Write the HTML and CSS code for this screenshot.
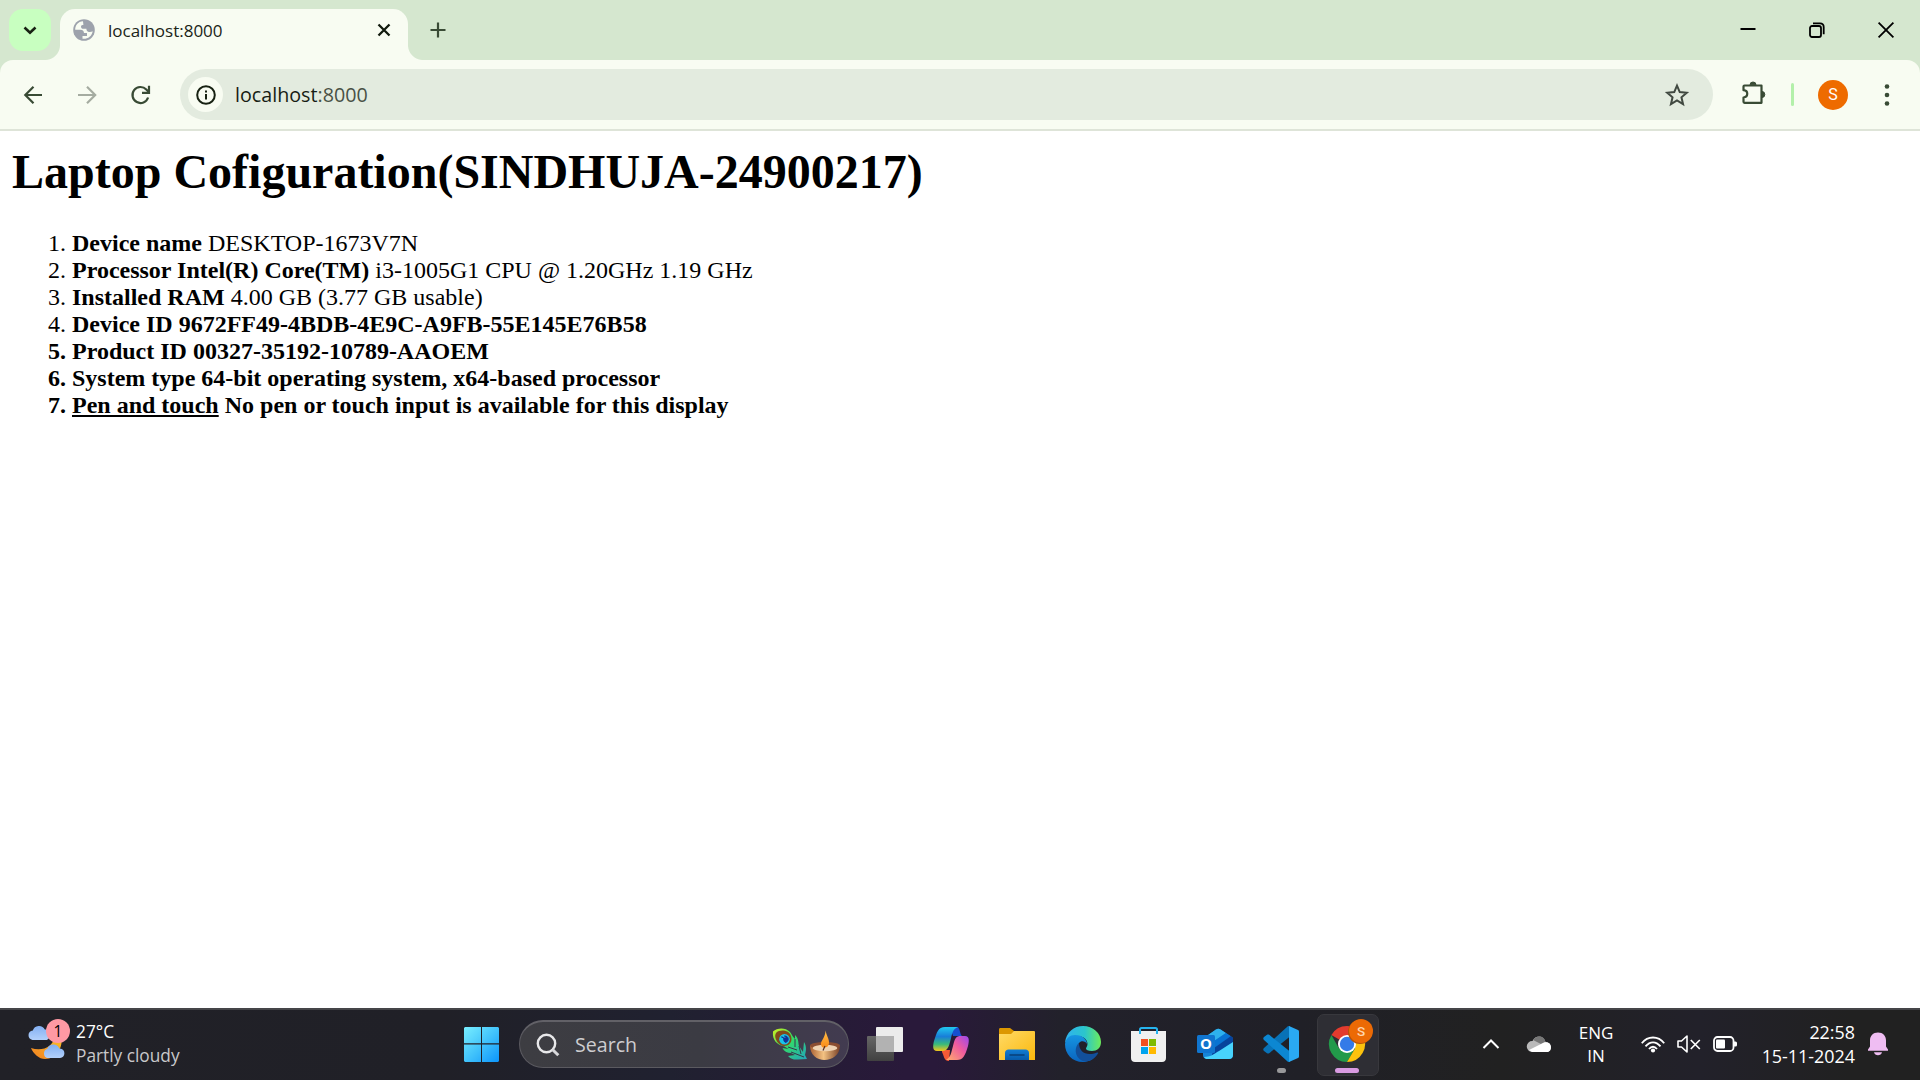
FILE: index.html
```html
<!DOCTYPE html>
<html lang="en">
<head>
<meta charset="utf-8">
<title>localhost:8000</title>
<link rel="stylesheet" href="styles.css">
</head>
<body>
<div class="screen">
  <header class="tabstrip">
    <div class="tab-search"><svg width="14" height="10" viewBox="0 0 14 10"><path d="M1.500 2.500l5.500 5.200L12.500 2.500" fill="none" stroke="#172112" stroke-width="2.600"/></svg></div>
    <div class="tab">
      <svg class="globe" width="22" height="22" viewBox="0 0 22 22"><circle cx="11" cy="11" r="10.800" fill="#9da2ac"/><path d="M10 2.200C5 2.400 2 6.500 2.200 10.800h5.200c2.200 0 3.400 1 3.600 3.200h3v3H9.500v2.700c4.500.8 9.600-2.500 10.200-7.500-1.200.8-3.300 1.200-5 .3-1-.5-1.300-1.600-1.300-2.700H10.300c-1.400 0-2.300-1-2.300-2.400C8 6.300 9.300 6 10.400 6z" fill="#f8fcf2"/></svg>
      <span class="tab-title">localhost:8000</span>
      <svg class="tab-close" width="14" height="14" viewBox="0 0 14 14"><path d="M1.500 1.500l11 11M12.500 1.500l-11 11" stroke="#111a0e" stroke-width="2.300"/></svg>
    </div>
    <svg class="new-tab" width="16" height="16" viewBox="0 0 16 16"><path d="M8 .5v15M.5 8h15" stroke="#394b35" stroke-width="2.200"/></svg>
    <div class="window-controls">
      <svg width="16" height="16" viewBox="0 0 16 16"><path d="M.5 7h15" stroke="#000" stroke-width="2"/></svg>
      <svg width="16" height="16" viewBox="0 0 16 16"><g fill="none" stroke="#000" stroke-width="1.800"><rect x="1" y="4" width="11" height="11" rx="2"/><path d="M4 1.300h7c2.300 0 3.700 1.400 3.700 3.700v7.300"/></g></svg>
      <svg width="16" height="16" viewBox="0 0 16 16"><path d="M.6.6l14.800 14.800M15.400.6L.6 15.400" stroke="#000" stroke-width="1.800"/></svg>
    </div>
  </header>

  <div class="toolbar-back">
  <nav class="toolbar">
    <svg class="nav-icon" width="20" height="20" viewBox="0 0 20 20"><path d="M19 10H2.500M10.500 1.800L2.300 10l8.200 8.200" fill="none" stroke="#394b35" stroke-width="2.200"/></svg>
    <svg class="nav-icon" width="20" height="20" viewBox="0 0 20 20"><path d="M1 10h16.500M10 1.800l8.200 8.200-8.200 8.200" fill="none" stroke="#a5aca1" stroke-width="2.200"/></svg>
    <svg class="nav-icon" width="20" height="20" viewBox="0 0 20 20"><path d="M17.100 12.500A8 8 0 1 1 15.300 4.500L17.500 6.800" fill="none" stroke="#394b35" stroke-width="2.200"/><path d="M11 7.900h7V.8" fill="none" stroke="#394b35" stroke-width="2.200"/></svg>
    <div class="omnibox">
      <span class="site-info"><svg width="20" height="20" viewBox="0 0 20 20"><circle cx="10" cy="10" r="8.800" fill="none" stroke="#172112" stroke-width="2"/><path d="M10 9v5.500M10 5.500v2" stroke="#172112" stroke-width="2"/></svg></span>
      <span class="url">localhost<span class="port">:8000</span></span>
      <svg class="star" width="24" height="24" viewBox="0 0 24 24"><path d="M12 2.600l2.750 6.500 7 .6-5.300 4.600 1.600 6.900L12 17.500l-6.050 3.700 1.600-6.900-5.300-4.600 7-.6z" fill="none" stroke="#414941" stroke-width="2" /></svg>
    </div>
    <svg class="extensions" width="26" height="26" viewBox="0 0 26 26"><path d="M3.500 5.500h17v17.300h-17a1 1 0 0 1-1-1v-4.300c5-.3 5-7 0-7.300V6.500a1 1 0 0 1 1-1z" fill="none" stroke="#394b35" stroke-width="2.200" stroke-linejoin="round"/><path d="M9 4.800a3 2.800 0 0 1 6 0zM21 11.500a2.800 3 0 0 1 0 6z" fill="#394b35" stroke="#394b35"/></svg>
    <span class="divider"></span>
    <span class="avatar">S</span>
    <svg class="menu" width="6" height="24" viewBox="0 0 6 24"><g fill="#394b35"><circle cx="3" cy="3.500" r="2.300"/><circle cx="3" cy="12" r="2.300"/><circle cx="3" cy="20.500" r="2.300"/></g></svg>
  </nav>
  </div>

  <main class="page">
    <h1>Laptop Cofiguration(SINDHUJA-24900217)</h1>
    <ol>
      <li><b>Device name</b> DESKTOP-1673V7N</li>
      <li><b>Processor Intel(R) Core(TM)</b> i3-1005G1 CPU @ 1.20GHz 1.19 GHz</li>
      <li><b>Installed RAM</b> 4.00 GB (3.77 GB usable)</li>
      <li><b>Device ID 9672FF49-4BDB-4E9C-A9FB-55E145E76B58</b></li>
      <li class="strong">Product ID 00327-35192-10789-AAOEM</li>
      <li class="strong">System type 64-bit operating system, x64-based processor</li>
      <li class="strong"><u>Pen and touch</u> No pen or touch input is available for this display</li>
    </ol>
  </main>

  <footer class="taskbar">
    <div class="weather">
      <div class="weather-icon">
        <svg width="42" height="42" viewBox="0 0 42 42">
          <defs>
            <linearGradient id="moon" x1="0" y1="1" x2="1" y2="0"><stop offset="0" stop-color="#f08022"/><stop offset="1" stop-color="#fcc227"/></linearGradient>
            <linearGradient id="cloud" x1="0" y1="0" x2="0" y2="1"><stop offset="0" stop-color="#83b0f2"/><stop offset="1" stop-color="#b2d0fb"/></linearGradient>
          </defs>
          <path d="M33 17c3 11-4 24-16 24C11 41 5.500 36 3 30c11 4 23-1 24-13z" fill="url(#moon)"/>
          <path d="M4.500 22a4.800 4.800 0 0 1 .3-9.500 6.500 6.500 0 0 1 12-1c5 0 7 10.500 1 10.500z" fill="url(#cloud)"/>
          <path d="M19 40a5 5 0 0 1 .3-9.300 6.500 6.500 0 0 1 12-.2C38 30 38 40 32 40z" fill="url(#cloud)"/>
        </svg>
        <span class="weather-badge">1</span>
      </div>
      <div class="weather-text"><span>27°C</span><span class="dim">Partly cloudy</span></div>
    </div>

    <div class="apps">
      <svg class="app" viewBox="0 0 36 36"><defs><linearGradient id="win" gradientUnits="userSpaceOnUse" x1="0" y1="0" x2="36" y2="36"><stop offset="0" stop-color="#7af0ff"/><stop offset=".5" stop-color="#43c4fb"/><stop offset="1" stop-color="#0a93fb"/></linearGradient></defs><path d="M1 1h16v16.300H0V2zM18 1h16l1 1v15.300H18zM0 18.500h17V36H1l-1-1zM18 18.500h17V35l-1 1H18z" fill="url(#win)"/></svg>
      <div class="search">
        <svg width="24" height="24" viewBox="0 0 24 24"><circle cx="10.500" cy="10.500" r="8.700" fill="none" stroke="#e8e8ea" stroke-width="2.400"/><path d="M16.500 16.500l5.800 5.800" stroke="#d7d7da" stroke-width="3"/></svg>
        <span>Search</span>
        <svg class="festive" width="70" height="36" viewBox="0 0 70 36">
          <defs>
            <linearGradient id="feather" x1="0" y1="0" x2="1" y2="1"><stop offset="0" stop-color="#d4ef20"/><stop offset=".4" stop-color="#34e160"/><stop offset="1" stop-color="#23a3bc"/></linearGradient>
            <linearGradient id="bowl" x1="0" x2="1"><stop offset="0" stop-color="#a96134"/><stop offset=".45" stop-color="#f3c282"/><stop offset="1" stop-color="#784027"/></linearGradient>
            <linearGradient id="flame" x1="0" y1="0" x2="0" y2="1"><stop offset="0" stop-color="#ffc04a"/><stop offset="1" stop-color="#f98a16"/></linearGradient>
          </defs>
          <path d="M1 4.500C5 1 13 0 18 5c2 3 3 5 5 7l0-4c4 4 3 7 4 11l4 6 1-10c3 5 2 9 1 13l2 4-9 .5c-4 .5-7-.5-10-3.500l7-1-4-2c-4 0-7-1.500-8.500-5l6 1-4-2.500C5 18 0 13 1 4.500z" fill="url(#feather)"/>
          <path d="M23 12l0 8M16 20l9 3M19 25l13 5M27 19l2 8" stroke="#34384a" stroke-width="1" fill="none"/>
          <path d="M4 6c4-4 13-3 15 3s-2 10-7 10S1 11 4 6z" fill="#814a1b"/>
          <circle cx="12.500" cy="12.300" r="5.300" fill="#19c4e8"/><path d="M9.500 10c3.500 0 1 4 4 5.500 4-1 3.500-7-1-6.500 3 2 1 3-3 1z" fill="#123196" stroke="#123196"/>
          <path d="M38 18.500C38 28 45 33 52.500 33S68 28 68 18.500z" fill="url(#bowl)"/><ellipse cx="53" cy="18.500" rx="15" ry="3.600" fill="#8b4e31"/><ellipse cx="53" cy="21" rx="12.200" ry="3.300" fill="#efd3b2"/>
          <path d="M53.500 3.500c1 5 3.500 8 3.500 12 0 6-7.500 7-8 2-.4-4 4.500-7 4.500-14z" fill="url(#flame)"/><path d="M53 19l-2 4.500" stroke="#512e24" stroke-width="1.200"/>
        </svg>
      </div>
      <svg class="app" viewBox="0 0 36 36"><defs><linearGradient id="tvb" x1="0" y1="0" x2="0" y2="1"><stop offset="0" stop-color="#666"/><stop offset="1" stop-color="#414141"/></linearGradient></defs><rect x="9" y="1" width="27" height="25" rx="1" fill="#ececec"/><rect y="10" width="27" height="25" rx="1" fill="url(#tvb)"/><path d="M9 10h18v16H9z" fill="#b2b2b2"/></svg>
      <svg class="app" viewBox="0 0 36 36">
        <defs>
          <linearGradient id="cpa" x1="0" y1="0" x2="0" y2="1"><stop offset="0" stop-color="#21c8ef"/><stop offset=".4" stop-color="#187ed8"/><stop offset=".72" stop-color="#3abb7a"/><stop offset="1" stop-color="#f6c71b"/></linearGradient>
          <linearGradient id="cpb" x1="1" y1="0" x2="0" y2="1"><stop offset="0" stop-color="#9b48ef"/><stop offset=".45" stop-color="#f05b9e"/><stop offset="1" stop-color="#ffb06a"/></linearGradient>
        </defs>
        <path d="M17 1h7c3 0 3 8 5 9h-9z" fill="#174fd0"/><path d="M9 24h8l-1 11c-5 0-5-5-7-9z" fill="#f65a36"/>
        <path d="M12 1h13c-6 2-6 8-8 15-2 8-4 9-9 9H4c-5 0-4-6-3-10C4 6 5 1 12 1z" fill="url(#cpa)"/>
        <path d="M28 10h4c5 0 4 6 3 10-3 10-5 14-11 14H13c5-3 5-7 7-14 2-8 3-10 8-10z" fill="url(#cpb)"/>
      </svg>
      <svg class="app" viewBox="0 0 36 36"><defs><linearGradient id="fold" x1="0" y1="0" x2="1" y2="1"><stop offset="0" stop-color="#ffda66"/><stop offset="1" stop-color="#fbb80d"/></linearGradient><linearGradient id="desk" x1="0" y1="0" x2="0" y2="1"><stop offset="0" stop-color="#127dd3"/><stop offset="1" stop-color="#075aaa"/></linearGradient></defs><path d="M0 3.500C0 2.500.5 2 1.500 2H11l4 3v5H0z" fill="#dc9701"/><path d="M0 8h12l3-3h20a1 1 0 0 1 1 1v28H0z" fill="url(#fold)"/><path d="M6 34v-7c0-2 1.500-3.500 3.500-3.500h17c2 0 3.500 1.500 3.500 3.500v7z" fill="url(#desk)"/><path d="M11 29h14" stroke="#083f78" stroke-width="1.500" stroke-linecap="round"/></svg>
      <svg class="app" viewBox="0 0 36 36">
        <defs><linearGradient id="edgeg" x1="0" x2="1"><stop offset="0" stop-color="#2fb2f0"/><stop offset=".55" stop-color="#2bc5cc"/><stop offset="1" stop-color="#6cec5c"/></linearGradient><linearGradient id="edgeb" x1="0" y1="0" x2="0" y2="1"><stop offset="0" stop-color="#1695e2"/><stop offset="1" stop-color="#0a64be"/></linearGradient></defs>
        <path d="M0 17C1 6 9 0 18 0c10 0 18 7 18 16 0 6-4 9-9 9-4 0-6-1-6-2.500 0-1 1.500-2 1.500-4.500 0-4-3.500-8-10-8-6 0-10 3-12.500 7z" fill="url(#edgeg)"/>
        <path d="M0 18c1-6 5-9 10-9 8 0 12 5 12 9-2-4-9-4-9 3 0 8 8 12 18 8-3 5-8 7-13 7C7 36 0 28 0 18z" fill="url(#edgeb)"/>
        <path d="M14 17c-5 4-5 16 6 18.500 6-.5 10-3 13-8 1-1-.5-1-1-1-10 4-18 0-18-9.500z" fill="#124f9a"/>
      </svg>
      <svg class="app" viewBox="0 0 36 36"><path d="M9 8V3.500C9 2.500 9.500 2 10.500 2h14c1 0 1.500.5 1.500 1.500V8" fill="none" stroke="#26b4ee" stroke-width="2"/><path d="M0 5h8v3h2V5h15v3h2V5h8v27c0 2.500-1.500 4-4 4H4c-2.500 0-4-1.500-4-4z" fill="#f0f0f0"/><path d="M10 13h7v7h-7z" fill="#f25022"/><path d="M18 13h7v7h-7z" fill="#7fba00"/><path d="M10 21h7v7h-7z" fill="#00a4ef"/><path d="M18 21h7v7h-7z" fill="#ffb900"/></svg>
      <svg class="app outlook" viewBox="0 0 36 36"><path d="M6 13L19 3.500c1.500-1 3-1 4.500 0L36 12v17c0 2.500-1.500 4-4 4H10c-2.500 0-4-1.500-4-4z" fill="#1684d7"/><path d="M8 11l11-7.500c1.500-1 3-1 4.500 0L29 7 16 16z" fill="#2eb2ed"/><path d="M29 7l5 3.300L17 22v-7z" fill="#0873d2"/><path d="M34 10l2 2v5L14 32l3-10z" fill="#07439b"/><path d="M36 16v13c0 2.500-1.500 4-4 4H10c-1 0-2-.5-3-2 6 0 10-3 15-6z" fill="#48d3fc"/><rect y="9" width="18" height="18" rx="1.500" fill="#1075cf"/><text x="9" y="23" text-anchor="middle" class="outlook-letter">O</text></svg>
      <div class="app running"><svg viewBox="0 0 36 36"><path d="M1 25l3 2.200c.8.500 1.500.5 2.200 0L27 10.500V1c-1-1.500-2-1-3 0L1 22c-1 1-1 2 0 3z" fill="#0872b7"/><path d="M1 11l3-2.200c.8-.5 1.500-.5 2.200 0L27 25.500V35c-1 1.500-2 1-3 0L1 14c-1-1-1-2 0-3z" fill="#0c87d2"/><path d="M26 0l9 4c.7.4 1 1 1 2v24c0 1-.3 1.600-1 2l-9 4z" fill="#2aa9f2"/></svg><span class="indicator"></span></div>
      <div class="app running active"><svg viewBox="0 0 36 36"><path d="M18 18L2.400 9a18 18 0 0 1 31.200 0z" fill="#e33b2e"/><path d="M2.400 9A18 18 0 0 0 18 36l8-13.500-8-4.500-8 4.500z" fill="#229a4a"/><path d="M18 9h15.600A18 18 0 0 1 18 36l8-13.500z" fill="#fcc20d"/><circle cx="18" cy="18" r="9" fill="#fff"/><circle cx="18" cy="18" r="7.200" fill="#347be8"/></svg><span class="profile-badge">S</span><span class="indicator"></span></div>
    </div>

    <div class="tray">
      <svg class="chevron" width="18" height="12" viewBox="0 0 18 12"><path d="M1.500 10L9 2.500l7.500 7.500" fill="none" stroke="#fff" stroke-width="2"/></svg>
      <svg class="onedrive" width="24" height="18" viewBox="0 0 24 18"><path d="M5 17a5.500 5.500 0 0 1 .5-11c3-6 11-6 13 1 7 0 7 10 1 10z" fill="#b9b9b9"/><path d="M6 5C9 0 17 0 18.500 7L14 9 6 5z" fill="#777"/><path d="M2 15L17 7.500c5-1 7 2 7 5 0 2-1 4.500-4 4.500H5z" fill="#fff"/></svg>
      <div class="lang"><span>ENG</span><span>IN</span></div>
      <svg class="wifi" width="24" height="18" viewBox="0 0 24 18"><g fill="none" stroke="#fff" stroke-width="1.800"><path d="M.8 8.200c6-7.600 16.400-7.600 22.400 0M4.500 11.400c4.500-5.500 10.500-5.500 15 0M8 14c2.500-3 5.500-3 8 0"/></g><circle cx="12" cy="15.500" r="2.100" fill="#fff"/></svg>
      <svg class="speaker" width="24" height="18" viewBox="0 0 24 18"><path d="M1 6h3.500L10 1v16l-5.500-5H1z" fill="none" stroke="#fff" stroke-width="1.600" stroke-linejoin="round"/><path d="M13.800 5l9 9M22.800 5l-9 9" stroke="#fff" stroke-width="1.700"/></svg>
      <svg class="battery" width="24" height="18" viewBox="0 0 24 18"><rect x="1" y="2" width="19.500" height="14" rx="3.500" fill="none" stroke="#fff" stroke-width="1.800"/><rect x="3" y="4.500" width="9" height="9" rx="1" fill="#fff"/><path d="M21 6.500h1.500a1.500 1.500 0 0 1 1.500 1.500v2a1.500 1.500 0 0 1-1.500 1.500H21z" fill="#fff"/></svg>
      <div class="clock"><span>22:58</span><span>15-11-2024</span></div>
      <svg class="bell" width="20" height="24" viewBox="0 0 20 24"><path d="M10 .5c5 0 8 3.500 8 8v6l2 3v1.300H0v-1.300l2-3v-6c0-4.500 3-8 8-8zM6 20.300h8c-.6 4-7.400 4-8 0z" fill="#efbdf2"/></svg>
    </div>
  </footer>
</div>
</body>
</html>
```
FILE: styles.css
```css
* { box-sizing: border-box; }
body { margin: 0; background: #fff; overflow: hidden; }
svg { display: block; flex: none; overflow: visible; }

.screen {
  width: 1920px;
  height: 1080px;
  display: flex;
  flex-direction: column;
  font-family: "Open Sans", "Noto Sans", sans-serif;
}

/* Tab strip */
.tabstrip {
  height: 60px;
  flex: none;
  display: flex;
  padding: 9px 26px 0 9px;
  background: #d5e7cf;
}
.tab-search {
  width: 42px;
  height: 42px;
  border-radius: 14px;
  background: #c8ffc0;
  display: flex;
  align-items: center;
  justify-content: center;
}
.tab {
  position: relative;
  width: 348px;
  height: 51px;
  margin-left: 9px;
  padding: 0 17px 9px 13px;
  border-radius: 15px 15px 0 0;
  background: #f8fcf2;
  display: flex;
  align-items: center;
}
.tab::before, .tab::after {
  content: "";
  position: absolute;
  bottom: 0;
  width: 15px;
  height: 15px;
}
.tab::before { left: -15px; background: radial-gradient(circle at 0 0, transparent 14.5px, #f8fcf2 15.500px); }
.tab::after { right: -15px; background: radial-gradient(circle at 100% 0, transparent 14.5px, #f8fcf2 15.500px); }
.tab-title { margin-left: 13px; font-size: 17px; line-height: 24px; color: #1b2418; padding-top: 2px; }
.tab-close { margin-left: auto; }
.new-tab { margin: 13px 0 0 22px; }
.window-controls { margin: 13px 0 0 auto; display: flex; gap: 53px; }

/* Toolbar */
.toolbar-back { background: #d5e7cf; flex: none; }
.toolbar {
  height: 71px;
  display: flex;
  align-items: center;
  padding: 0 30px 2px 23px;
  border-radius: 13px 13px 0 0;
  background: #f8fcf2;
  box-shadow: inset 0 -2px #dee4d8;
}
.nav-icon { margin-right: 34px; }
.omnibox {
  width: 1533px;
  height: 51px;
  margin-left: -5px;
  padding: 0 24px 0 8px;
  border-radius: 26px;
  background: #e3ebdf;
  display: flex;
  align-items: center;
}
.site-info {
  width: 35px;
  height: 35px;
  border-radius: 50%;
  background: #f8fcf2;
  display: flex;
  align-items: center;
  justify-content: center;
}
.url { margin-left: 12px; font-size: 19.700px; line-height: 28px; color: #171d14; }
.port { color: #495145; }
.star { margin-left: auto; }
.extensions { margin: -3px 0 0 28px; }
.divider { width: 3px; height: 23px; margin-left: 24px; border-radius: 2px; background: #b3f0aa; }
.avatar {
  width: 30px;
  height: 30px;
  margin-left: 24px;
  border-radius: 50%;
  background: #ee6b00;
  color: #fff;
  font: 16px/30px Roboto, sans-serif;
  text-align: center;
}
.menu { margin-left: auto; }

/* Document */
.page {
  flex: 1;
  padding: 12px;
  color: #000;
  font-family: "Liberation Serif", "Times New Roman", serif;
  font-size: 24px;
  line-height: 27px;
}
.page h1 { margin: 2px 0 31px; font-size: 48px; line-height: 54px; }
.page ol { margin: 0; padding-left: 60px; }
.strong { font-weight: bold; }
.page u { text-decoration-thickness: 2px; text-underline-offset: 2px; }

/* Taskbar */
.taskbar {
  height: 72px;
  flex: none;
  display: flex;
  align-items: center;
  padding: 0 32px 0 28px;
  background: linear-gradient(90deg, #212127 0, #202027 440px, #202130 670px, #29193a 905px, #29193a 935px, #22212b 1060px, #202027 1300px, #212121 1500px, #22212a 1700px, #212121 1850px);
  box-shadow: inset 0 2px #454548;
  color: #fff;
  line-height: 24px;
}
.weather { width: 436px; display: flex; }
.weather-icon { position: relative; margin-top: -3px; }
.weather-badge {
  position: absolute;
  left: 18px;
  top: 1px;
  width: 24px;
  height: 24px;
  border-radius: 50%;
  background: #ff99a4;
  color: #000;
  font-size: 15.500px;
  text-align: center;
}
.weather-text { display: flex; flex-direction: column; margin: -1px 0 0 6px; font-size: 17.300px; }
.dim { color: #c8c8cb; }

.apps { display: flex; align-items: center; gap: 30px; }
.app { position: relative; width: 36px; height: 36px; }
.search {
  width: 330px;
  height: 48px;
  margin: 0 -12px 0 -11px;
  padding: 0 6px 0 16px;
  display: flex;
  align-items: center;
  border: 1px solid #5b5a60;
  border-top: 2px solid #626167;
  border-radius: 24px;
  background: linear-gradient(90deg, #3d3d42, #3b3b43 55%, #423b50);
  color: #cecdd0;
  font-size: 19.600px;
}
.search span { margin-left: 15px; }
.festive { margin-left: auto; }
.outlook-letter { font: bold 15px "Open Sans", sans-serif; fill: #fff; }
.indicator {
  position: absolute;
  left: 14px;
  top: 42px;
  width: 9px;
  height: 5px;
  border-radius: 3px;
  background: #98989a;
}
.active::before {
  content: "";
  position: absolute;
  left: -12px;
  top: -12px;
  width: 60px;
  height: 60px;
  border-radius: 7px;
  background: #2e2e34;
  border: 1px solid #38383d;
}
.active svg { position: relative; }
.active .indicator { left: 6px; width: 24px; background: #d99be2; }
.profile-badge {
  position: absolute;
  left: 20px;
  top: -7px;
  width: 24px;
  height: 24px;
  border-radius: 50%;
  background: #ec6a05;
  box-shadow: -1px 1px #b55309;
  color: #ffd5ae;
  font: 500 13.500px/24px Roboto, sans-serif;
  text-align: center;
}

.tray { display: flex; align-items: center; margin-left: auto; font-size: 17px; }
.onedrive { margin-left: 27px; }
.lang { width: 48px; margin: 1px 0 0 21px; display: flex; flex-direction: column; align-items: center; line-height: 22.500px; }
.wifi { margin-left: 21px; }
.speaker, .battery { margin-left: 12px; }
.clock { width: 96px; margin-left: 22px; display: flex; flex-direction: column; align-items: flex-end; margin-top: -1px; font-size: 17.900px; }
.bell { margin-left: 13px; }
```
